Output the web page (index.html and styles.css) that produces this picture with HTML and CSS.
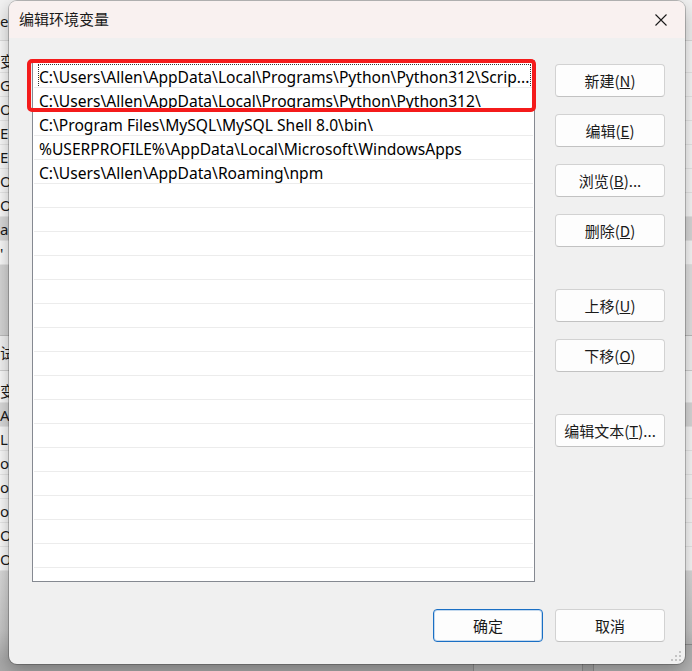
FILE: index.html
```html
<!DOCTYPE html>
<html lang="zh-CN">
<head>
  <meta charset="UTF-8">
  <title>编辑环境变量</title>
<link rel="stylesheet" href="styles.css">
</head>
<body>
  <!-- window behind the dialog, only its left and bottom edges show -->
  <div class="behind">
    <div class="behind-top">er</div>
    <div class="behind-list">
      <div class="brow">变</div>
      <div class="brow">G</div>
      <div class="brow">O</div>
      <div class="brow">E</div>
      <div class="brow">E</div>
      <div class="brow">O</div>
      <div class="brow">O</div>
      <div class="brow sel">a</div>
      <div class="brow">'</div>
    </div>
    <div class="behind-gap"></div>
    <div class="behind-head">试</div>
    <div class="behind-list">
      <div class="brow">变</div>
      <div class="brow sel">A</div>
      <div class="brow">L</div>
      <div class="brow">o</div>
      <div class="brow">o</div>
      <div class="brow">o</div>
      <div class="brow">O</div>
      <div class="brow">O</div>
    </div>
    <div class="behind-foot">
      <span class="bbtn"></span>
      <span class="bbtn"></span>
    </div>
  </div>

  <div class="dialog">
    <div class="titlebar">
      <span class="title">编辑环境变量</span>
      <span class="close">
        <svg width="12" height="12" viewBox="0 0 12 12"><path d="M0.5 0.5 L11.5 11.5 M11.5 0.5 L0.5 11.5" stroke="#1a1a1a" stroke-width="1.1" fill="none"/></svg>
      </span>
    </div>

    <div class="body">
      <div class="main">
        <div class="listwrap">
          <div class="list">
            <div class="row focus">C:\Users\Allen\AppData\Local\Programs\Python\Python312\Scrip...</div>
            <div class="row">C:\Users\Allen\AppData\Local\Programs\Python\Python312\</div>
            <div class="row">C:\Program Files\MySQL\MySQL Shell 8.0\bin\</div>
            <div class="row">%USERPROFILE%\AppData\Local\Microsoft\WindowsApps</div>
            <div class="row">C:\Users\Allen\AppData\Roaming\npm</div>
            <div class="row"></div>
            <div class="row"></div>
            <div class="row"></div>
            <div class="row"></div>
            <div class="row"></div>
            <div class="row"></div>
            <div class="row"></div>
            <div class="row"></div>
            <div class="row"></div>
            <div class="row"></div>
            <div class="row"></div>
            <div class="row"></div>
            <div class="row"></div>
            <div class="row"></div>
            <div class="row"></div>
            <div class="row"></div>
          </div>
          <div class="mark"></div>
        </div>

        <div class="actions">
          <button class="btn">新建(<u>N</u>)</button>
          <button class="btn">编辑(<u>E</u>)</button>
          <button class="btn">浏览(<u>B</u>)...</button>
          <button class="btn spaced">删除(<u>D</u>)</button>
          <button class="btn">上移(<u>U</u>)</button>
          <button class="btn spaced">下移(<u>O</u>)</button>
          <button class="btn">编辑文本(<u>T</u>)...</button>
        </div>
      </div>

      <div class="footer">
        <button class="btn primary">确定</button>
        <button class="btn">取消</button>
      </div>
    </div>

    <svg class="grip" width="12" height="12" viewBox="0 0 12 12">
      <rect x="9" y="1" width="2" height="2" fill="#c4c4c4"/>
      <rect x="5" y="5" width="2" height="2" fill="#c4c4c4"/>
      <rect x="9" y="5" width="2" height="2" fill="#c4c4c4"/>
      <rect x="1" y="9" width="2" height="2" fill="#c4c4c4"/>
      <rect x="5" y="9" width="2" height="2" fill="#c4c4c4"/>
      <rect x="9" y="9" width="2" height="2" fill="#c4c4c4"/>
    </svg>
  </div>
</body>
</html>
```

FILE: styles.css
```css
body {
  margin: 0;
  width: 692px;
  height: 671px;
  overflow: hidden;
  position: relative;
  font-family: "Noto Sans", "Noto Sans CJK SC", sans-serif;
  font-size: 15px;
  color: #1a1a1a;
  background: #e6e6e6;
}

/* the environment variables window behind */
.behind {
  position: absolute;
  inset: 0;
  display: flex;
  flex-direction: column;
  background: #ececec;
  color: #1a1a1a;
  white-space: nowrap;
  overflow: hidden;
}

.behind-top {
  height: 40px;
  line-height: 42px;
  background: #f2f2f2;
  border-bottom: 1px solid #dcdcdc;
}

.behind-list {
  padding-top: 8px;
  background: #fafafa;
}

.brow {
  height: 24px;
  line-height: 24px;
  border-bottom: 1px solid #e8e8e8;
  box-sizing: border-box;
}

.brow.sel {
  background: #dadada;
}

.behind-gap {
  height: 70px;
  background: linear-gradient(to right, #d6d6d6, #e4e4e4);
  border-bottom: 1px solid #bdbdbd;
}

.behind-head {
  height: 34px;
  line-height: 34px;
  background: #f3f3f3;
  border-bottom: 1px solid #d0d0d0;
}

.behind-foot {
  flex: 1;
  background: linear-gradient(to bottom, #dadada 0, #c6c6c6 60px, #a9a9a9 90px);
  position: relative;
}

.bbtn {
  position: absolute;
  top: 73px;
  width: 108px;
  height: 30px;
  border: 1px solid #8f8f8f;
  border-radius: 4px;
  background: #b3b3b3;
}

.bbtn:first-child { left: 473px; }
.bbtn:last-child { left: 593px; }

/* dialog */
.dialog {
  position: absolute;
  left: 9px;
  top: 1px;
  width: 676px;
  height: 663px;
  background: #f0f0f0;
  border-radius: 8px;
  box-shadow: 0 0 0 1px rgba(0, 0, 0, 0.22), 0 6px 18px rgba(0, 0, 0, 0.3);
  overflow: hidden;
  display: flex;
  flex-direction: column;
}

.titlebar {
  height: 37px;
  flex: none;
  display: flex;
  align-items: center;
  background: #f9f1f0;
  padding-left: 10px;
}

.title {
  font-family: "Noto Sans CJK SC", sans-serif;
  font-size: 15px;
  color: #1a1a1a;
  margin-top: -2px;
}

.close {
  margin-left: auto;
  width: 46px;
  height: 37px;
  display: flex;
  align-items: center;
  justify-content: center;
  margin-right: 1px;
}

.body {
  flex: 1;
  padding: 22px 20px 0 23px;
  display: flex;
  flex-direction: column;
}

.main {
  display: flex;
  gap: 20px;
}

.listwrap {
  position: relative;
}

.list {
  width: 503px;
  height: 522px;
  box-sizing: border-box;
  border: 1px solid #858991;
  background: #ffffff;
  padding: 3px 1px 0 1px;
  overflow: hidden;
}

.row {
  height: 24px;
  line-height: 26px;
  box-sizing: border-box;
  border-bottom: 1px solid #ececec;
  padding: 0 1px 0 5px;
  font-size: 15.6px;
  white-space: nowrap;
  overflow: hidden;
  text-overflow: ellipsis;
  color: #000;
  position: relative;
}

.row.focus::before {
  content: "";
  position: absolute;
  left: 4px;
  right: 2px;
  top: 0;
  bottom: -1px;
  border: 1px dotted #333;
}

/* red annotation box */
.mark {
  position: absolute;
  left: -5px;
  top: -1px;
  width: 509px;
  height: 53px;
  box-sizing: border-box;
  border: 4px solid #f41b1b;
  border-radius: 5px;
}

.actions {
  width: 110px;
  padding-top: 4px;
  display: flex;
  flex-direction: column;
  gap: 17px;
}

.btn {
  height: 33px;
  width: 110px;
  box-sizing: border-box;
  background: #fdfdfd;
  border: 1px solid #d2d2d2;
  border-bottom-color: #c2c2c2;
  border-radius: 4px;
  font-family: "Noto Sans CJK SC", sans-serif;
  font-size: 15px;
  color: #1a1a1a;
  padding: 0;
  cursor: pointer;
}

.btn.spaced {
  margin-bottom: 25px;
}

.footer {
  margin-top: 27px;
  display: flex;
  justify-content: flex-end;
  gap: 12px;
}

.btn.primary {
  border: 1px solid #1a6fc4;
  box-shadow: inset 0 0 0 1px rgba(26, 111, 196, 0.25);
}

.grip {
  position: absolute;
  right: 3px;
  bottom: 2px;
}
```
